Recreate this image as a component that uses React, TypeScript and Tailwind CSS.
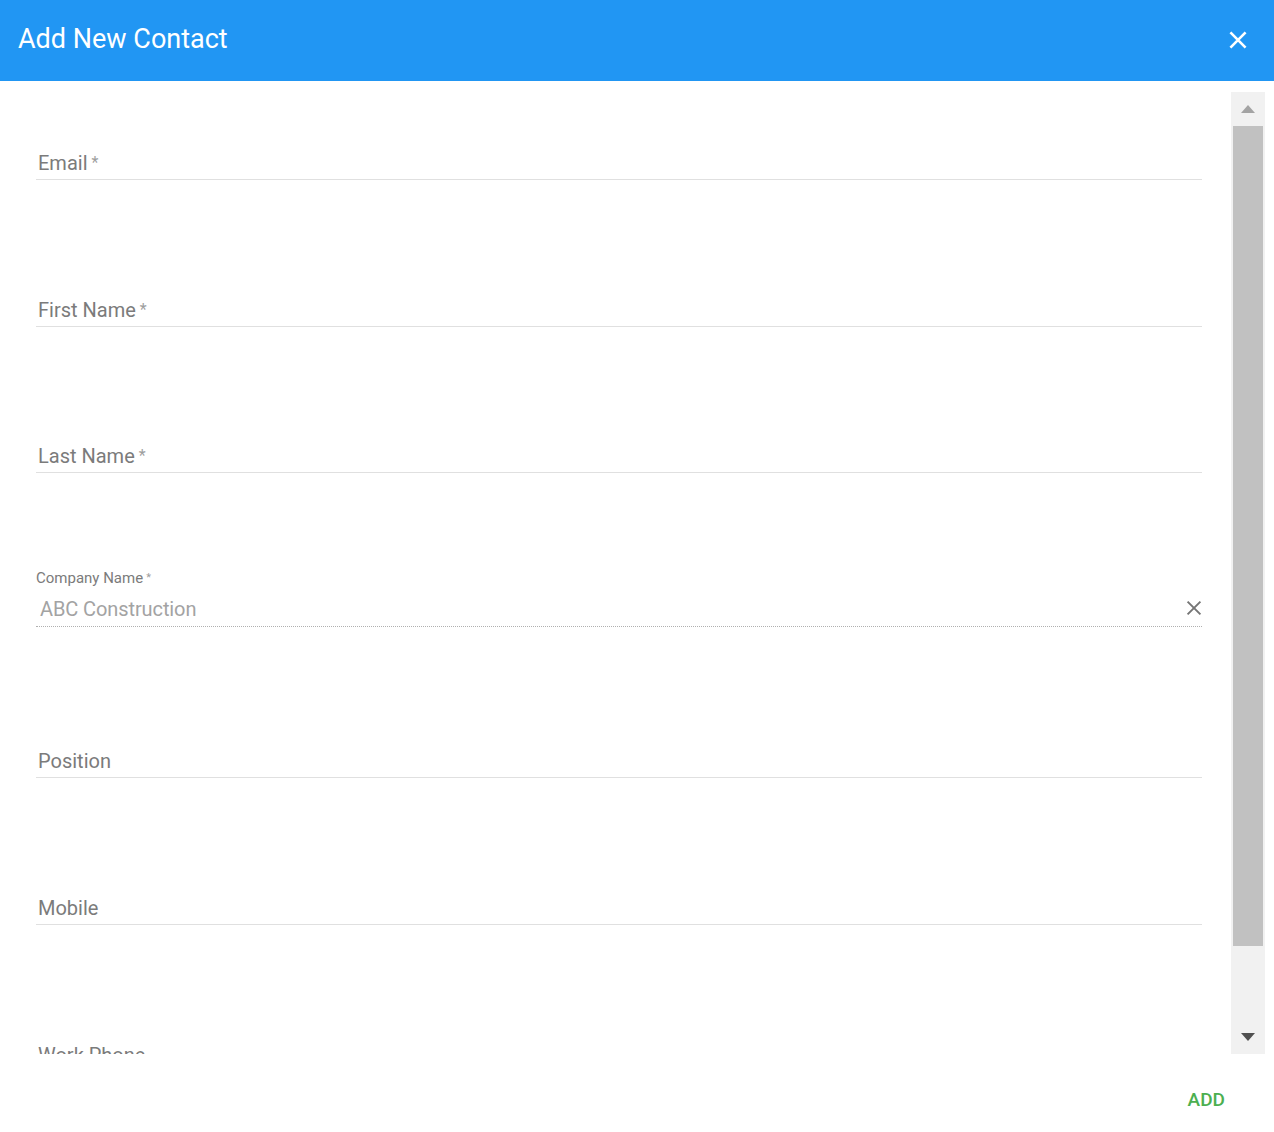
import React from 'react';

const font = { fontFamily: 'Roboto, "Noto Sans", sans-serif' };

function Field({ label, required, className = '' }: { label: string; required?: boolean; className?: string }) {
  return (
    <div className={`h-[72px] flex flex-col justify-end border-b border-[#e0e0e0] ${className}`}>
      <div className="pl-[2px] pb-[4px] text-[20px] leading-[24px] text-[#7b7b7b]">
        {label}
        {required && <span className="ml-[4px] text-[16px] text-[#9e9e9e] align-top">*</span>}
      </div>
    </div>
  );
}

function CompanyField() {
  return (
    <div className="mt-[74px] h-[80px] flex flex-col justify-end border-b border-dotted border-[#b0b0b0]">
      <div className="text-[15px] leading-[18px] text-[#7b7b7b]">
        Company Name<span className="ml-[3px] text-[11px] text-[#9e9e9e] align-top">*</span>
      </div>
      <div className="flex items-center justify-between mt-[8px] pb-[3px]">
        <span className="pl-[4px] text-[20px] leading-[28px] tracking-[-0.1px] text-[#a3a3a3]">ABC Construction</span>
        <svg width="22" height="22" viewBox="0 0 24 24" className="-mt-[3px] -mr-[3px] text-[#757575]">
          <path d="M5 5L19 19M19 5L5 19" stroke="currentColor" strokeWidth="2.1" fill="none" />
        </svg>
      </div>
    </div>
  );
}

function Scrollbar() {
  return (
    <div className="w-[34px] shrink-0 bg-[#f1f1f1] flex flex-col">
      <div className="h-[34px] flex items-center justify-center">
        <svg width="14" height="8" viewBox="0 0 14 8"><path d="M0 8L7 0L14 8Z" fill="#a3a3a3" /></svg>
      </div>
      <div className="mx-[2px] h-[820px] bg-[#c1c1c1]" />
      <div className="flex-1 flex items-end justify-center pb-[13px]">
        <svg width="14" height="8" viewBox="0 0 14 8"><path d="M0 0L7 8L14 0Z" fill="#505050" /></svg>
      </div>
    </div>
  );
}

export default function App() {
  return (
    <div className="h-screen w-full bg-white flex flex-col overflow-hidden" style={font}>
      <header className="h-[81px] shrink-0 bg-[#2196f3] flex items-center justify-between pl-[18px] pr-[23px]">
        <h1 className="text-[27px] leading-[32px] text-white font-normal pb-[4px]">Add New Contact</h1>
        <svg width="26" height="26" viewBox="0 0 24 24" className="text-white -mt-[2px]">
          <path d="M5 5L19 19M19 5L5 19" stroke="currentColor" strokeWidth="2.4" fill="none" />
        </svg>
      </header>
      <div className="h-[973px] shrink-0 flex pt-[11px] pr-[9px]">
        <div className="flex-1 overflow-hidden pl-[36px] pr-[29px] pt-[16px]">
          <Field label="Email" required />
          <Field label="First Name" required className="mt-[75px]" />
          <Field label="Last Name" required className="mt-[74px]" />
          <CompanyField />
          <Field label="Position" className="mt-[79px]" />
          <Field label="Mobile" className="mt-[75px]" />
          <Field label="Work Phone" className="mt-[75px]" />
        </div>
        <Scrollbar />
      </div>
      <footer className="flex-1 flex items-center justify-end pr-[49px] pt-[14px]">
        <button className="text-[19px] font-medium text-[#4caf50] uppercase">Add</button>
      </footer>
    </div>
  );
}
